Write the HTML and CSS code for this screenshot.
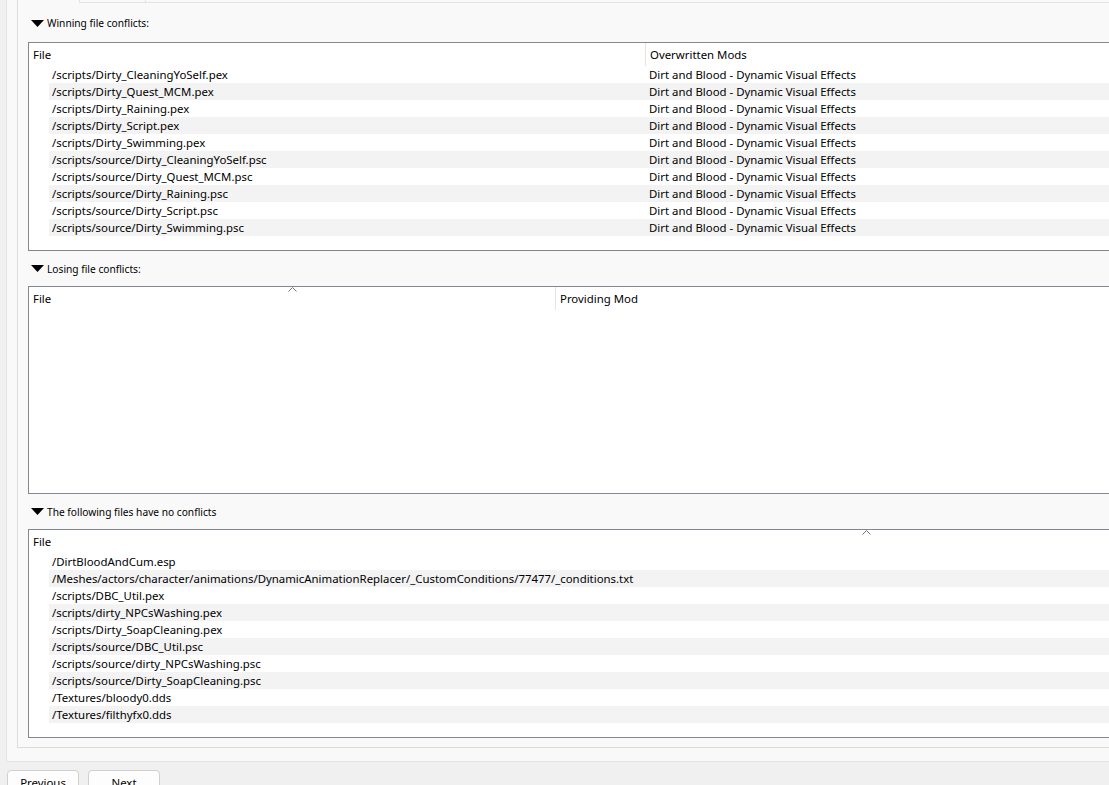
FILE: index.html
```html
<!DOCTYPE html>
<html>
<head>
    <title>Conflicts</title>
    <link rel="stylesheet" href="styles.css">
</head>
<body>
    <div class="pane">
        <div class="frame">
            <div class="tabs">
                <div class="tab tab-active"></div>
                <div class="tab tab-other"></div>
                <div class="tab-rest"></div>
            </div>

            <div class="section-title first">
                <svg class="arrow" width="13" height="7" viewBox="0 0 13 7"><polygon points="0,0 13,0 6.5,7" fill="#000"/></svg>
                <span>Winning file conflicts:</span>
            </div>
            <div class="tree">
                <div class="tree-head">
                    <div class="head-cell col-file-1">File</div>
                    <div class="head-cell col-mod">Overwritten Mods</div>
                </div>
                <div class="row"><span class="cell cell-file-1">/scripts/Dirty_CleaningYoSelf.pex</span><span class="cell cell-mod">Dirt and Blood - Dynamic Visual Effects</span></div>
                <div class="row alt"><span class="cell cell-file-1">/scripts/Dirty_Quest_MCM.pex</span><span class="cell cell-mod">Dirt and Blood - Dynamic Visual Effects</span></div>
                <div class="row"><span class="cell cell-file-1">/scripts/Dirty_Raining.pex</span><span class="cell cell-mod">Dirt and Blood - Dynamic Visual Effects</span></div>
                <div class="row alt"><span class="cell cell-file-1">/scripts/Dirty_Script.pex</span><span class="cell cell-mod">Dirt and Blood - Dynamic Visual Effects</span></div>
                <div class="row"><span class="cell cell-file-1">/scripts/Dirty_Swimming.pex</span><span class="cell cell-mod">Dirt and Blood - Dynamic Visual Effects</span></div>
                <div class="row alt"><span class="cell cell-file-1">/scripts/source/Dirty_CleaningYoSelf.psc</span><span class="cell cell-mod">Dirt and Blood - Dynamic Visual Effects</span></div>
                <div class="row"><span class="cell cell-file-1">/scripts/source/Dirty_Quest_MCM.psc</span><span class="cell cell-mod">Dirt and Blood - Dynamic Visual Effects</span></div>
                <div class="row alt"><span class="cell cell-file-1">/scripts/source/Dirty_Raining.psc</span><span class="cell cell-mod">Dirt and Blood - Dynamic Visual Effects</span></div>
                <div class="row"><span class="cell cell-file-1">/scripts/source/Dirty_Script.psc</span><span class="cell cell-mod">Dirt and Blood - Dynamic Visual Effects</span></div>
                <div class="row alt"><span class="cell cell-file-1">/scripts/source/Dirty_Swimming.psc</span><span class="cell cell-mod">Dirt and Blood - Dynamic Visual Effects</span></div>
            </div>

            <div class="section-title">
                <svg class="arrow" width="13" height="7" viewBox="0 0 13 7"><polygon points="0,0 13,0 6.5,7" fill="#000"/></svg>
                <span>Losing file conflicts:</span>
            </div>
            <div class="tree tree-short">
                <div class="tree-head">
                    <div class="head-cell col-file-2">File
                        <svg class="sort" width="9" height="5" viewBox="0 0 9 5"><polyline points="0.5,4.5 4.5,0.5 8.5,4.5" fill="none" stroke="#777" stroke-width="1"/></svg>
                    </div>
                    <div class="head-cell col-mod">Providing Mod</div>
                </div>
            </div>

            <div class="section-title">
                <svg class="arrow" width="13" height="7" viewBox="0 0 13 7"><polygon points="0,0 13,0 6.5,7" fill="#000"/></svg>
                <span>The following files have no conflicts</span>
            </div>
            <div class="tree">
                <div class="tree-head">
                    <div class="head-cell col-file-3">File
                        <svg class="sort" width="9" height="5" viewBox="0 0 9 5"><polyline points="0.5,4.5 4.5,0.5 8.5,4.5" fill="none" stroke="#777" stroke-width="1"/></svg>
                    </div>
                </div>
                <div class="row"><span class="cell">/DirtBloodAndCum.esp</span></div>
                <div class="row alt"><span class="cell">/Meshes/actors/character/animations/DynamicAnimationReplacer/_CustomConditions/77477/_conditions.txt</span></div>
                <div class="row"><span class="cell">/scripts/DBC_Util.pex</span></div>
                <div class="row alt"><span class="cell">/scripts/dirty_NPCsWashing.pex</span></div>
                <div class="row"><span class="cell">/scripts/Dirty_SoapCleaning.pex</span></div>
                <div class="row alt"><span class="cell">/scripts/source/DBC_Util.psc</span></div>
                <div class="row"><span class="cell">/scripts/source/dirty_NPCsWashing.psc</span></div>
                <div class="row alt"><span class="cell">/scripts/source/Dirty_SoapCleaning.psc</span></div>
                <div class="row"><span class="cell">/Textures/bloody0.dds</span></div>
                <div class="row alt"><span class="cell">/Textures/filthyfx0.dds</span></div>
            </div>
        </div>
    </div>

    <div class="buttons">
        <button class="btn">Previous</button>
        <button class="btn">Next</button>
    </div>
</body>
</html>
```

FILE: styles.css
```css
body {
    margin: 0;
    background-color: #f0f0f0;
    font-family: "Noto Sans", sans-serif;
    font-size: 11.4px;
    color: #000;
    overflow: hidden;
    width: 1109px;
    height: 785px;
}

.pane {
    margin-left: 6px;
    width: 1900px;
    background-color: #f9f9f9;
    border-left: 1px solid #e3e3e3;
    border-bottom: 1px solid #e3e3e3;
    padding: 0 0 13px 10px;
}

.frame {
    border-left: 1px solid #dcdcdc;
    border-bottom: 1px solid #dcdcdc;
    padding: 0 0 9px 10px;
}

/* thin strip of tab bottoms at the top */
.tabs {
    display: flex;
    height: 3px;
    margin-left: -11px;
}

.tab-active {
    width: 62px;
    border-right: 1px solid #e3e3e3;
}

.tab-other {
    width: 66px;
    border-right: 1px solid #e3e3e3;
    border-bottom: 1px solid #e3e3e3;
    box-sizing: border-box;
}

.tab-rest {
    flex: 1;
    border-bottom: 1px solid #e3e3e3;
    box-sizing: border-box;
}

.section-title {
    display: flex;
    align-items: center;
    height: 35px;
    padding-left: 3px;
    font-size: 10.2px;
}

.section-title.first {
    height: 39px;
    padding-top: 1px;
    box-sizing: border-box;
}

.arrow {
    margin-right: 3px;
}

.tree {
    position: relative;
    height: 207px;
    background-color: #fff;
    border: 1px solid #828790;
}

.tree-short {
    height: 206px;
}

.tree-head {
    display: flex;
    height: 23px;
}

.head-cell {
    position: relative;
    flex-shrink: 0;
    padding-left: 4px;
    line-height: 23px;
    box-sizing: border-box;
}

.col-file-1 { width: 616px; }
.col-file-2 { width: 526px; }
.col-file-3 { width: 1674px; }

.col-mod {
    border-left: 1px solid #e5e5e5;
}

.sort {
    position: absolute;
    top: 0;
    left: 50%;
    margin-left: -4px;
}

.row {
    display: flex;
    height: 17px;
    line-height: 17px;
    margin-left: 20px;
    white-space: nowrap;
}

.row.alt {
    background-color: #f3f3f3;
}

.cell {
    padding-left: 3px;
}

.cell-file-1 {
    width: 596px;
    flex-shrink: 0;
    box-sizing: border-box;
}

.cell-mod {
    padding-left: 4px;
}

.buttons {
    display: flex;
    gap: 9px;
    padding: 8px 0 0 7px;
}

.btn {
    width: 72px;
    height: 24px;
    background-color: #fdfdfd;
    border: 1px solid #d0d0d0;
    border-radius: 4px;
    font-family: "Noto Sans", sans-serif;
    font-size: 11.4px;
    color: #000;
    padding: 0;
}
```
